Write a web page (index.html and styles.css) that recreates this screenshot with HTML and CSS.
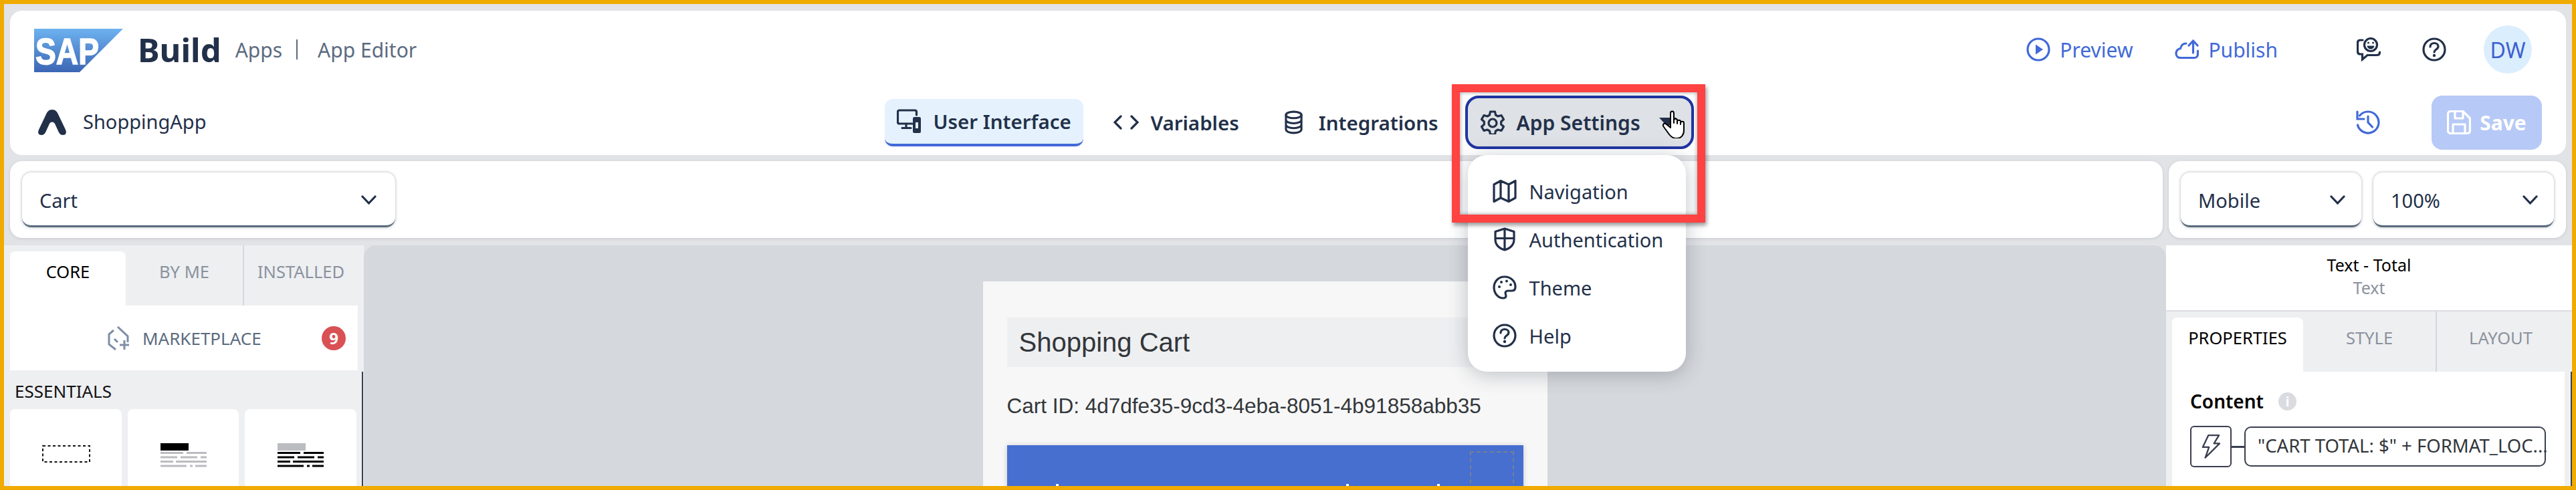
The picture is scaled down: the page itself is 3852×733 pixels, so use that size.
FILE: index.html

```html
<!DOCTYPE html>
<html lang="en">
<head>
    <meta charset="UTF-8">
    <title>SAP Build Apps - App Editor</title>
    <link rel="stylesheet" href="styles.css">
</head>
<body>
    <header class="app-header">
        <div class="header-top">
            <svg class="sap-logo" viewBox="0 0 133 65">
                <defs>
                    <linearGradient id="sapBlue" x1="0" y1="0" x2="0" y2="1">
                        <stop offset="0" stop-color="#6db2f0"/>
                        <stop offset="1" stop-color="#3c66b4"/>
                    </linearGradient>
                </defs>
                <polygon points="0,0 133,0 68,65 0,65" fill="url(#sapBlue)"/>
                <text x="2" y="53" textLength="95" lengthAdjust="spacingAndGlyphs" class="sap-letters">SAP</text>
            </svg>
            <span class="brand-name">Build</span>
            <span class="brand-crumb">Apps</span>
            <span class="brand-sep"></span>
            <span class="brand-crumb">App Editor</span>

            <div class="header-actions">
                <a class="action-link">
                    <svg class="icon" viewBox="0 0 36 36"><circle cx="18" cy="18" r="16" class="st"/><path d="M14 10.500 25 18 14 25.500Z" class="fl"/></svg>
                    Preview
                </a>
                <a class="action-link publish-link">
                    <svg class="icon" viewBox="0 0 36 36"><path d="M17 9C12 9 9.500 12 8.500 16.500 4.500 17.500 2 20 2 24c0 4 3 6.500 6.500 6.500H29c3.500 0 5.500-2.500 5.500-5.500V20" class="st"/><path d="M27.500 23V6M21 12l6.500-7 6.500 7" class="st"/></svg>
                    Publish
                </a>
                <svg class="icon feedback-icon" viewBox="0 0 36 36">
                    <path d="M9 4H5.500C3 4 1.500 5.500 1.500 8V21c0 2.500 1.500 4 4 4H8.500V33L16 26.500H30c3 0 4.500-1.500 4.500-4.500" class="st dk"/>
                    <circle cx="21" cy="11" r="9.500" class="st dk"/>
                    <circle cx="17.500" cy="8" r="1.500" class="fl dk"/><circle cx="24.500" cy="8" r="1.500" class="fl dk"/>
                    <path d="M15.500 12.500h11c-.5 3.500-3 5-5.500 5s-5-1.500-5.500-5Z" class="fl dk"/>
                </svg>
                <svg class="icon help-icon" viewBox="0 0 36 36">
                    <circle cx="18" cy="18" r="16" class="st dk"/>
                    <path d="M12 14c0-3.500 2.500-5.500 6-5.500s6 2 6 5c0 4.500-6 4.500-6 8.500" class="st dk"/>
                    <circle cx="18" cy="27" r="2.200" class="fl dk"/>
                </svg>
                <span class="avatar">DW</span>
            </div>
        </div>

        <div class="header-bottom">
            <div class="project-name">
                <svg class="project-logo" viewBox="0 0 44 38"><path d="M22 0c5 0 7.500 3 9.500 8L42 30c2 4.500.5 8-4 8-3 0-5-1.500-6.500-5L26 21c-1.500-3.500-6.500-3.500-8 0L12.500 33C11 36.500 9 38 6 38c-4.500 0-6-3.500-4-8L12.500 8C14.500 3 17 0 22 0Z"/></svg>
                <span class="project-title">ShoppingApp</span>
            </div>

            <nav class="main-nav">
                <a class="nav-item nav-active">
                    <svg class="icon" viewBox="0 0 36 36">
                        <path d="M23 22H4C2.500 22 1.500 21 1.500 19.500V4.500C1.500 3 2.500 2 4 2H27c1.500 0 2.500 1 2.500 2.500V9" class="st dk"/>
                        <path d="M14 22v6M8 28.500h13" class="st dk"/>
                        <rect x="24" y="12" width="12" height="24" rx="2.500" class="fl dk"/>
                        <rect x="28" y="20" width="4" height="9" fill="#e5f2fd"/>
                    </svg>
                    User Interface
                </a>
                <a class="nav-item nav-code">
                    <svg class="icon code-icon" viewBox="0 0 38 24"><path d="M11 3 2 12l9 9M27 3l9 9-9 9" class="st dk"/></svg>
                    Variables
                </a>
                <a class="nav-item nav-db">
                    <svg class="icon db-icon" viewBox="0 0 28 36">
                        <ellipse cx="14" cy="6.500" rx="12" ry="5" class="st dk"/>
                        <path d="M2 6.500v22.500c0 3 5 5.500 12 5.500s12-2.500 12-5.500V6.500M2 14c0 3 5 5.500 12 5.500S26 17 26 14M2 21.500c0 3 5 5.500 12 5.500s12-2.500 12-5.500" class="st dk"/>
                    </svg>
                    Integrations
                </a>
                <div class="settings-menu">
                    <a class="settings-button">
                        <svg class="icon" viewBox="0 0 36 36">
                            <path d="M14.500 2h7l1 5 3.500 2 5-1.500 3.500 6-3.800 3.500v4L34.500 24.500 31 30.500l-5-1.500-3.500 2-1 5h-7l-1-5-3.500-2-5 1.500-3.500-6L5.300 21v-4L1.500 13.500 5 7.500 10 9l3.500-2Z" class="st dk join"/>
                            <circle cx="18" cy="19" r="6" class="st dk"/>
                        </svg>
                        App Settings
                        <span class="caret"></span>
                        <svg class="hand-cursor" viewBox="0 0 36 42">
                            <path d="M12 26V4.500c0-4 5-4 5 0V19v-4c0-3 5-3 5 0v5-3c0-3 5-3 5 0v4-2c0-3 5-3 5 0v11c0 7-4 12-11 12-5 0-8-2-11-6L2 25c-3-4 1-7 4-4Z" fill="#fff" stroke="#000" stroke-width="2" stroke-linejoin="round"/>
                        </svg>
                    </a>
                    <div class="settings-dropdown">
                        <a class="menu-item">
                            <svg class="icon" viewBox="0 0 36 36"><path d="M2 8 12 2.500 24 8 34 2.500V28L24 33.500 12 28 2 33.500ZM12 2.500V28M24 8V33.500" class="st dk join"/></svg>
                            Navigation
                        </a>
                        <a class="menu-item">
                            <svg class="icon" viewBox="0 0 36 36"><path d="M18 2 32 6.500V18c0 8-6 13.500-14 16C10 31.500 4 26 4 18V6.500ZM18 2V34M4 16.500H32" class="st dk join"/></svg>
                            Authentication
                        </a>
                        <a class="menu-item">
                            <svg class="icon" viewBox="0 0 36 36">
                                <path d="M18 2C8 2 2 9.500 2 18c0 8.500 6 16 14 16 4 0 4.500-3 3.500-5.500C18 25 20 23 23 23h6c3.500 0 5-2.500 5-6C34 8.500 27 2 18 2Z" class="st dk join"/>
                                <circle cx="10" cy="17" r="2" class="fl dk"/><circle cx="13" cy="10" r="2" class="fl dk"/><circle cx="21" cy="8.500" r="2" class="fl dk"/><circle cx="27" cy="14" r="2" class="fl dk"/>
                            </svg>
                            Theme
                        </a>
                        <a class="menu-item">
                            <svg class="icon" viewBox="0 0 36 36">
                                <circle cx="18" cy="18" r="16" class="st dk"/>
                                <path d="M12 14c0-3.500 2.500-5.500 6-5.500s6 2 6 5c0 4.500-6 4.500-6 8.500" class="st dk"/>
                                <circle cx="18" cy="27" r="2.200" class="fl dk"/>
                            </svg>
                            Help
                        </a>
                    </div>
                    <div class="highlight-box"></div>
                </div>
            </nav>

            <div class="project-actions">
                <svg class="icon" viewBox="0 0 36 36">
                    <path d="M5.500 8A16 16 0 1 1 2.500 22" class="st"/>
                    <path d="M2 2V13H12" class="st"/>
                    <path d="M18 9V18L24.500 25" class="st"/>
                </svg>
                <button class="save-button">
                    <svg class="icon" viewBox="0 0 36 36"><path d="M6 1.500H24L34.500 12V30c0 3-1.500 4.500-4.500 4.500H6c-3 0-4.500-1.500-4.500-4.500V6c0-3 1.500-4.500 4.500-4.500ZM12 2V12H24V3M9 34V21H27V34" class="st wh join"/></svg>
                    Save
                </button>
            </div>
        </div>
    </header>

    <section class="toolbar">
        <div class="toolbar-panel toolbar-main">
            <div class="select-box page-select">Cart <svg class="chevron" viewBox="0 0 23 14"><path d="M2 2l9.500 10L21 2" class="st dk"/></svg></div>
        </div>
        <div class="toolbar-panel toolbar-side">
            <div class="select-box view-select">Mobile <svg class="chevron" viewBox="0 0 23 14"><path d="M2 2l9.500 10L21 2" class="st dk"/></svg></div>
            <div class="select-box view-select">100% <svg class="chevron" viewBox="0 0 23 14"><path d="M2 2l9.500 10L21 2" class="st dk"/></svg></div>
        </div>
    </section>

    <main class="workspace">
        <aside class="left-panel">
            <div class="panel-tabs left-tabs">
                <span class="panel-tab tab-active">CORE</span>
                <span class="panel-tab">BY ME</span>
                <span class="panel-tab tab-split">INSTALLED</span>
            </div>
            <div class="marketplace">
                <svg class="market-icon" viewBox="0 0 34 36">
                    <path d="M15 1 30 15v9M9 6 2 12v15l10 8M10 19l5 5" fill="none" stroke="#7f8ea6" stroke-width="3"/>
                    <path d="M25 21v14M18 28h14" fill="none" stroke="#7f8ea6" stroke-width="3"/>
                </svg>
                <span class="market-label">MARKETPLACE</span>
                <span class="market-badge">9</span>
            </div>
            <div class="palette">
                <div class="palette-title">ESSENTIALS</div>
                <div class="palette-grid">
                    <div class="palette-card">
                        <svg class="tile-icon tile-container" viewBox="0 0 72 26"><rect x="1" y="1" width="70" height="24" fill="none" stroke="#111" stroke-width="2" stroke-dasharray="4 3.500"/></svg>
                    </div>
                    <div class="palette-card">
                        <svg class="tile-icon" viewBox="0 0 69 36">
                            <rect width="42" height="11" fill="#000"/>
                            <path d="M0 14.500H34M39 14.500H69M0 21H25M30 21H55M60 21H69M0 27.500H19M23 27.500H69M0 34H39M44 34H48M52 34H69" stroke="#bbbcc0" stroke-width="3"/>
                        </svg>
                    </div>
                    <div class="palette-card">
                        <svg class="tile-icon" viewBox="0 0 69 36">
                            <rect width="42" height="11" fill="#bbbcc0"/>
                            <path d="M0 14.500H34M39 14.500H69M0 21H25M30 21H55M60 21H69M0 27.500H19M23 27.500H69M0 34H39M44 34H48M52 34H69" stroke="#000" stroke-width="3"/>
                        </svg>
                    </div>
                </div>
            </div>
        </aside>

        <div class="canvas">
            <div class="mobile-page">
                <h2 class="page-heading">Shopping Cart</h2>
                <p class="cart-id">Cart ID: 4d7dfe35-9cd3-4eba-8051-4b91858abb35</p>
                <div class="total-card">
                    <span class="drop-zone"></span>
                    <span class="letter-top top-a"></span>
                    <span class="letter-top top-b"></span>
                    <span class="letter-top top-c"></span>
                </div>
            </div>
        </div>

        <aside class="right-panel">
            <div class="selection-info">
                <div class="selection-name">Text - Total</div>
                <div class="selection-type">Text</div>
            </div>
            <div class="panel-tabs right-tabs">
                <span class="panel-tab tab-active tab-props">PROPERTIES</span>
                <span class="panel-tab tab-style">STYLE</span>
                <span class="panel-tab tab-split tab-layout">LAYOUT</span>
            </div>
            <div class="props-wrap">
                <div class="props-body">
                    <div class="prop-label">Content <span class="info-dot">i</span></div>
                    <div class="prop-row">
                        <span class="bind-button">
                            <svg viewBox="0 0 30 40" class="bolt"><path d="M11 2H28L20 15H29L6 38 12 21H2Z" fill="none" stroke="#3a3f50" stroke-width="2.500" stroke-linejoin="round"/></svg>
                        </span>
                        <span class="bind-line"></span>
                        <span class="bind-field">"CART TOTAL: $" + FORMAT_LOC...</span>
                    </div>
                </div>
            </div>
        </aside>
    </main>
</body>
</html>
```

FILE: styles.css

```css
* {
    box-sizing: border-box;
}

body {
    margin: 0;
    width: 3852px;
    height: 733px;
    border: 6px solid #f0ab00;
    background-color: #e2e3e7;
    font-family: "Noto Sans", sans-serif;
    color: #223049;
    overflow: hidden;
    display: flex;
    flex-direction: column;
}

/* shared svg bits */
.icon {
    width: 36px;
    height: 36px;
    flex: none;
}

.st {
    fill: none;
    stroke: #4169d8;
    stroke-width: 3.2;
    stroke-linecap: round;
}

.fl {
    fill: #4169d8;
}

.st.dk {
    stroke: #223049;
}

.fl.dk {
    fill: #223049;
}

.st.wh {
    stroke: #fff;
}

.st.join {
    stroke-linejoin: round;
}

/* header */
.app-header {
    margin: 10px 9px 0;
    height: 216px;
    flex: none;
    background: #fff;
    border-radius: 18px;
    padding: 0 36px;
    display: grid;
    grid-template-rows: 118px 98px;
}

.header-top {
    display: flex;
    align-items: center;
    padding-bottom: 2px;
}

.sap-logo {
    width: 133px;
    height: 65px;
    flex: none;
    margin-top: 2px;
}

.sap-letters {
    font-family: "Liberation Sans", sans-serif;
    font-weight: 700;
    font-size: 55px;
    fill: #fff;
    stroke: #fff;
    stroke-width: 1.5px;
}

.brand-name {
    margin-left: 22px;
    font-size: 49px;
    font-weight: 700;
    line-height: 1;
}

.brand-crumb {
    margin-left: 21px;
    font-size: 30px;
    color: #5b6b80;
}

.brand-sep {
    width: 2px;
    height: 30px;
    margin-left: 21px;
    margin-right: 9px;
    background: #5b6b80;
}

.header-actions {
    margin-left: auto;
    margin-right: 15px;
    display: flex;
    align-items: center;
}

.action-link {
    display: flex;
    align-items: center;
    gap: 14px;
    font-size: 30px;
    color: #4169d8;
}

.publish-link {
    margin-left: 63px;
}

.feedback-icon {
    margin-left: 118px;
}

.help-icon {
    margin-left: 62px;
}

.avatar {
    margin-left: 56px;
    width: 72px;
    height: 72px;
    border-radius: 50%;
    background: #dbeefd;
    color: #3c60d0;
    font-size: 32px;
    display: flex;
    align-items: center;
    justify-content: center;
}

.header-bottom {
    display: grid;
    grid-template-columns: 1fr auto 1fr;
    align-items: center;
    padding-left: 4px;
}

.project-name {
    display: flex;
    align-items: center;
    gap: 24px;
    padding-left: 1px;
    font-size: 29px;
}

.project-title {
    margin-top: -3px;
}

.project-logo {
    width: 44px;
    height: 38px;
    fill: #223049;
}

.main-nav {
    display: flex;
    align-items: center;
    font-size: 29.5px;
    font-weight: 600;
}

.nav-item {
    display: flex;
    align-items: center;
    height: 71px;
}

.nav-active {
    width: 297px;
    padding-left: 18px;
    gap: 18px;
    background: #e5f2fd;
    border-radius: 12px;
    border-bottom: 4px solid #4169d8;
}

.nav-code {
    margin-left: 45px;
    gap: 17px;
}

.code-icon {
    width: 38px;
    height: 24px;
}

.nav-db {
    margin-left: 68px;
    gap: 24px;
}

.db-icon {
    width: 27px;
    height: 36px;
}

.settings-menu {
    position: relative;
    margin-left: 40px;
}

.settings-button {
    width: 342px;
    height: 80px;
    padding-left: 19px;
    display: flex;
    align-items: center;
    gap: 18px;
    position: relative;
    font-size: 30px;
    background: #dee1e5;
    border: 4px solid #1f34a2;
    border-radius: 20px;
}

.caret {
    width: 0;
    height: 0;
    margin-left: 10px;
    border-left: 13px solid transparent;
    border-right: 13px solid transparent;
    border-top: 14px solid #223049;
}

.hand-cursor {
    position: absolute;
    left: 291px;
    top: 18px;
    width: 36px;
    height: 42px;
}

.settings-dropdown {
    position: absolute;
    left: 4px;
    top: 89px;
    width: 326px;
    height: 324px;
    padding: 18px 0 0 37px;
    z-index: 5;
    background: #fff;
    border-radius: 28px;
    box-shadow: 0 4px 30px rgba(50, 58, 75, 0.3);
    font-size: 29px;
    font-weight: 400;
}

.menu-item {
    height: 72px;
    display: flex;
    align-items: center;
    gap: 19px;
}

.highlight-box {
    position: absolute;
    left: -20px;
    top: -17px;
    width: 379px;
    height: 207px;
    z-index: 6;
    border: 12px solid #ff4242;
    box-shadow: 2px 4px 6px rgba(0, 0, 0, 0.4), inset 0 0 6px rgba(0, 0, 0, 0.4);
}

.project-actions {
    display: flex;
    justify-content: flex-end;
    align-items: center;
    gap: 77px;
}

.save-button {
    width: 165px;
    height: 81px;
    border: none;
    border-radius: 16px;
    background: #b7c9f6;
    color: #fff;
    font-family: inherit;
    font-size: 30px;
    font-weight: 700;
    display: flex;
    align-items: center;
    justify-content: center;
    gap: 13px;
}

/* toolbar */
.toolbar {
    margin: 9px 9px 0;
    height: 115px;
    flex: none;
    display: flex;
    gap: 9px;
}

.toolbar-panel {
    background: #fff;
    border-radius: 18px;
    box-shadow: 0 1px 4px rgba(50, 58, 75, 0.15);
    padding: 17px 18px 0;
    display: flex;
    gap: 18px;
}

.toolbar-main {
    flex: 1;
}

.toolbar-side {
    width: 594px;
}

.select-box {
    height: 82px;
    padding: 3px 28px 0 26px;
    display: flex;
    align-items: center;
    justify-content: space-between;
    font-size: 29px;
    background: #fff;
    border-radius: 14px;
    border-bottom: 3px solid #5b6b80;
    box-shadow: 0 0 4px rgba(70, 80, 100, 0.45);
}

.page-select {
    width: 558px;
}

.view-select {
    width: 270px;
    padding-right: 24px;
}

.chevron {
    width: 23px;
    height: 14px;
}

/* main area */
.workspace {
    margin-top: 11px;
    flex: 1;
    min-height: 0;
    display: grid;
    grid-template-columns: 538px 1fr 607px;
    overflow: hidden;
}

.left-panel,
.right-panel {
    background: #eeeff1;
}

.panel-tabs {
    display: flex;
    height: 90px;
    padding: 9px 0 0 9px;
    font-size: 25.5px;
    color: #8a929e;
}

.panel-tab {
    padding-top: 13px;
    text-align: center;
    flex: none;
}

.tab-active {
    background: #fff;
    color: #000;
    border-radius: 8px 8px 0 0;
}

.tab-split {
    margin-top: -9px;
    padding-top: 22px;
    border-left: 2px solid #d5d7db;
}

.left-tabs .panel-tab:nth-child(1) {
    width: 173px;
}

.left-tabs .panel-tab:nth-child(2) {
    width: 175px;
}

.left-tabs .panel-tab:nth-child(3) {
    width: 172px;
}

.marketplace {
    margin-left: 9px;
    width: 520px;
    height: 97px;
    background: #fff;
    padding: 0 18px 0 146px;
    display: flex;
    align-items: center;
}

.market-icon {
    width: 34px;
    height: 36px;
}

.market-label {
    margin-left: 18px;
    font-size: 26px;
    color: #5b6b80;
}

.market-badge {
    margin-left: auto;
    width: 36px;
    height: 36px;
    border-radius: 50%;
    background: #d95155;
    color: #fff;
    font-size: 24px;
    font-weight: 700;
    display: flex;
    align-items: center;
    justify-content: center;
}

.palette {
    margin-top: 2px;
    height: 171px;
    padding-left: 9px;
    border-right: 2px solid #3a3f50;
    width: 537px;
}

.palette-title {
    height: 56px;
    padding: 11px 0 0 7px;
    font-size: 26px;
    color: #111;
}

.palette-grid {
    display: grid;
    grid-template-columns: 167px 166px 167px;
    gap: 9px;
}

.palette-card {
    height: 160px;
    background: #fff;
    border-radius: 8px 8px 0 0;
    display: flex;
    justify-content: center;
    padding-top: 51px;
}

.tile-icon {
    width: 69px;
    height: 36px;
}

.tile-container {
    width: 72px;
    height: 26px;
    margin-top: 3px;
}

.canvas {
    background: #d5d8dc;
    border-radius: 18px 18px 0 0;
    padding-top: 54px;
    display: flex;
    justify-content: center;
}

.mobile-page {
    width: 844px;
    height: 400px;
    flex: none;
    padding: 54px 36px 0;
    background: #f7f7f7;
    color: #32363a;
}

.page-heading {
    margin: 0;
    height: 74px;
    padding-left: 18px;
    background: #eeeff1;
    font-family: "Liberation Sans", sans-serif;
    font-size: 40px;
    font-weight: 400;
    line-height: 74px;
}

.cart-id {
    margin: 38px 0 0;
    height: 40px;
    font-family: "Liberation Sans", sans-serif;
    font-size: 31.5px;
    line-height: 40px;
}

.total-card {
    margin-top: 39px;
    height: 200px;
    position: relative;
    background: #466fd0;
    box-shadow: 0 1px 8px rgba(0, 0, 0, 0.2);
}

.drop-zone {
    position: absolute;
    left: 692px;
    top: 9px;
    width: 66px;
    height: 100px;
    border: 2px dashed #777f92;
}

.letter-top {
    position: absolute;
    top: 58px;
    width: 4px;
    height: 3px;
    background: #fff;
}

.top-a {
    left: 73px;
}

.top-b {
    left: 507px;
}

.top-c {
    left: 643px;
}

/* right panel */
.selection-info {
    height: 99px;
    background: #fff;
    border-bottom: 2px solid #dcdde2;
    text-align: center;
    font-size: 25px;
    padding-top: 12px;
    line-height: 34px;
    color: #000;
}

.selection-type {
    color: #8a929e;
}

.tab-props {
    width: 196px;
}

.tab-style {
    width: 198px;
}

.tab-layout {
    width: 193px;
}

.props-wrap {
    height: 171px;
    padding-left: 9px;
    border-right: 2px solid #3a3f50;
}

.props-body {
    width: 587px;
    height: 100%;
    background: #fff;
    padding: 24px 0 0 27px;
}

.prop-label {
    display: flex;
    align-items: center;
    gap: 22px;
    height: 40px;
    font-size: 28px;
    font-weight: 600;
    color: #000;
}

.info-dot {
    width: 27px;
    height: 27px;
    border-radius: 50%;
    background: #d9dbe0;
    color: #fff;
    font-size: 20px;
    font-weight: 700;
    display: flex;
    align-items: center;
    justify-content: center;
}

.prop-row {
    margin-top: 17px;
    display: flex;
    align-items: center;
}

.bind-button {
    width: 62px;
    height: 62px;
    border: 2px solid #3a3f50;
    border-radius: 6px;
    display: flex;
    align-items: center;
    justify-content: center;
}

.bolt {
    width: 28px;
    height: 38px;
}

.bind-line {
    width: 19px;
    height: 3px;
    background: #3a3f50;
}

.bind-field {
    width: 451px;
    height: 60px;
    border: 2.5px solid #3a3f50;
    border-radius: 10px;
    padding-left: 18px;
    font-size: 27.5px;
    line-height: 54px;
    color: #32363a;
    white-space: nowrap;
}
```
